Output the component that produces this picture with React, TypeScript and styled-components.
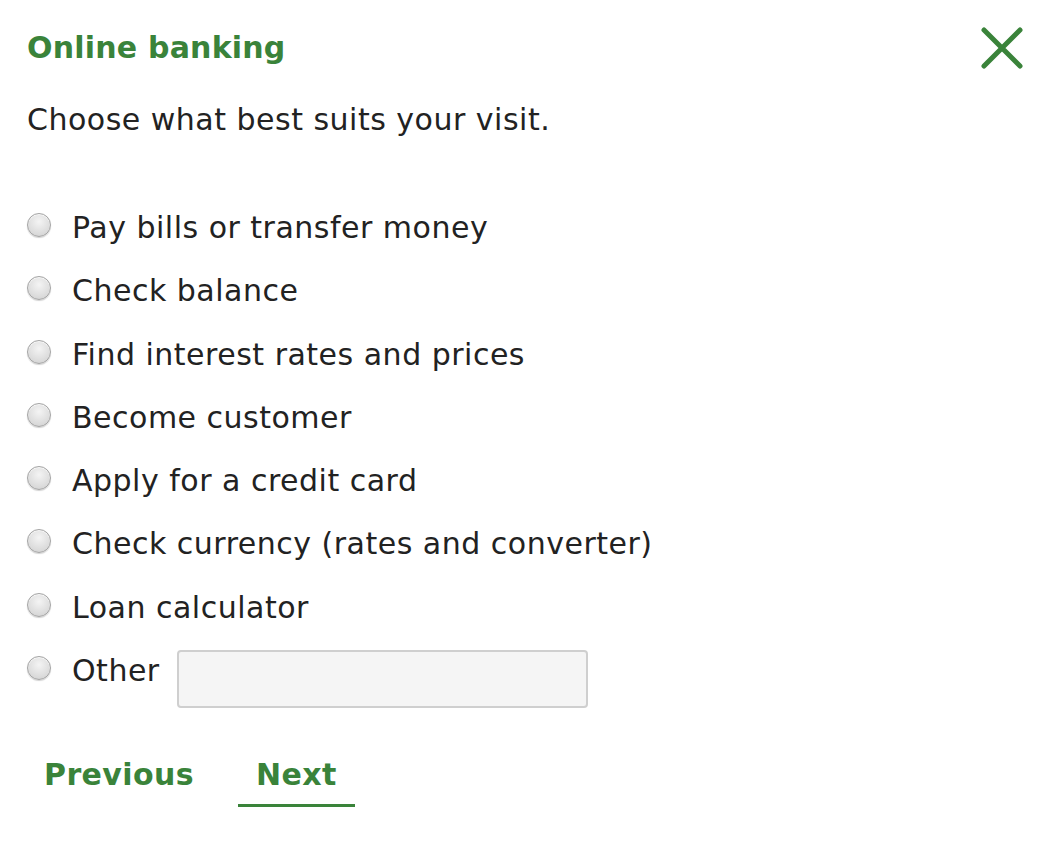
import React, { FC } from 'react';
import styled, { createGlobalStyle } from 'styled-components';

const GREEN = '#3a833a';

const GlobalStyle = createGlobalStyle`
  html, body {
    margin: 0;
    padding: 0;
    background: #ffffff;
  }
  body {
    font-family: 'DejaVu Sans', Verdana, sans-serif;
    color: #222222;
  }
`;

const Dialog = styled.div`
  width: 1050px;
  height: 854px;
  box-sizing: border-box;
  padding: 28px 26px 0 27px;
  display: flex;
  flex-direction: column;
`;

const Header = styled.div`
  display: flex;
  justify-content: space-between;
  align-items: center;
  height: 40px;
`;

const Title = styled.h1`
  margin: 0;
  font-size: 30px;
  line-height: 40px;
  letter-spacing: 0.2px;
  font-weight: bold;
  color: ${GREEN};
`;

const CloseButton = styled.button`
  border: none;
  background: none;
  padding: 0;
  margin: 0;
  width: 44px;
  height: 40px;
  cursor: pointer;
  display: flex;
  align-items: center;
  justify-content: center;
  overflow: visible;
`;

const Intro = styled.p`
  margin: 32px 0 0 0;
  font-size: 30px;
  line-height: 40px;
  letter-spacing: 0.5px;
`;

const Options = styled.div`
  margin-top: 68px;
  display: flex;
  flex-direction: column;
  gap: 23.3px;
`;

const OptionRow = styled.label`
  display: flex;
  align-items: flex-start;
  font-size: 30px;
  line-height: 40px;
  letter-spacing: 0.5px;
  cursor: pointer;
`;

const Radio = styled.span`
  width: 22px;
  height: 22px;
  border-radius: 50%;
  border: 1px solid #a4a4a4;
  background: radial-gradient(circle at 50% 35%, #f4f4f4 0%, #dadada 70%, #c6c6c6 100%);
  box-shadow: inset 0 1px 1px rgba(255, 255, 255, 0.8), 0 1px 1px rgba(0, 0, 0, 0.18);
  flex: none;
  margin: 5px 21px 0 0;
`;

const OtherInput = styled.input`
  margin: -1px 0 0 17px;
  width: 411px;
  height: 58px;
  box-sizing: border-box;
  border: 2px solid #cfcfcf;
  border-radius: 4px;
  background: #f5f5f5;
  font-family: inherit;
  font-size: 24px;
  padding: 0 10px;
`;

const Nav = styled.div`
  margin: 47px 0 0 -1px;
  display: flex;
`;

const NavButton = styled.button<{ $active?: boolean }>`
  border: none;
  background: none;
  font-family: inherit;
  font-size: 30px;
  line-height: 40px;
  letter-spacing: 0.4px;
  font-weight: bold;
  color: ${GREEN};
  padding: 0 18px 9px 18px;
  border-bottom: 3px solid ${(p) => (p.$active ? GREEN : 'transparent')};
  cursor: pointer;
  margin-right: 26px;
`;

const options = [
  'Pay bills or transfer money',
  'Check balance',
  'Find interest rates and prices',
  'Become customer',
  'Apply for a credit card',
  'Check currency (rates and converter)',
  'Loan calculator',
];

const App: FC = () => {
  return (
    <>
      <GlobalStyle />
      <Dialog>
        <Header>
          <Title>Online banking</Title>
          <CloseButton aria-label="Close">
            <svg width="42" height="42" viewBox="0 0 42 42">
              <path d="M3 3 L39 39 M39 3 L3 39" stroke={GREEN} strokeWidth="5" strokeLinecap="round" />
            </svg>
          </CloseButton>
        </Header>
        <Intro>Choose what best suits your visit.</Intro>
        <Options>
          {options.map((o) => (
            <OptionRow key={o}>
              <Radio />
              {o}
            </OptionRow>
          ))}
          <OptionRow>
            <Radio />
            Other
            <OtherInput type="text" />
          </OptionRow>
        </Options>
        <Nav>
          <NavButton>Previous</NavButton>
          <NavButton $active>Next</NavButton>
        </Nav>
      </Dialog>
    </>
  );
};

export default App;
